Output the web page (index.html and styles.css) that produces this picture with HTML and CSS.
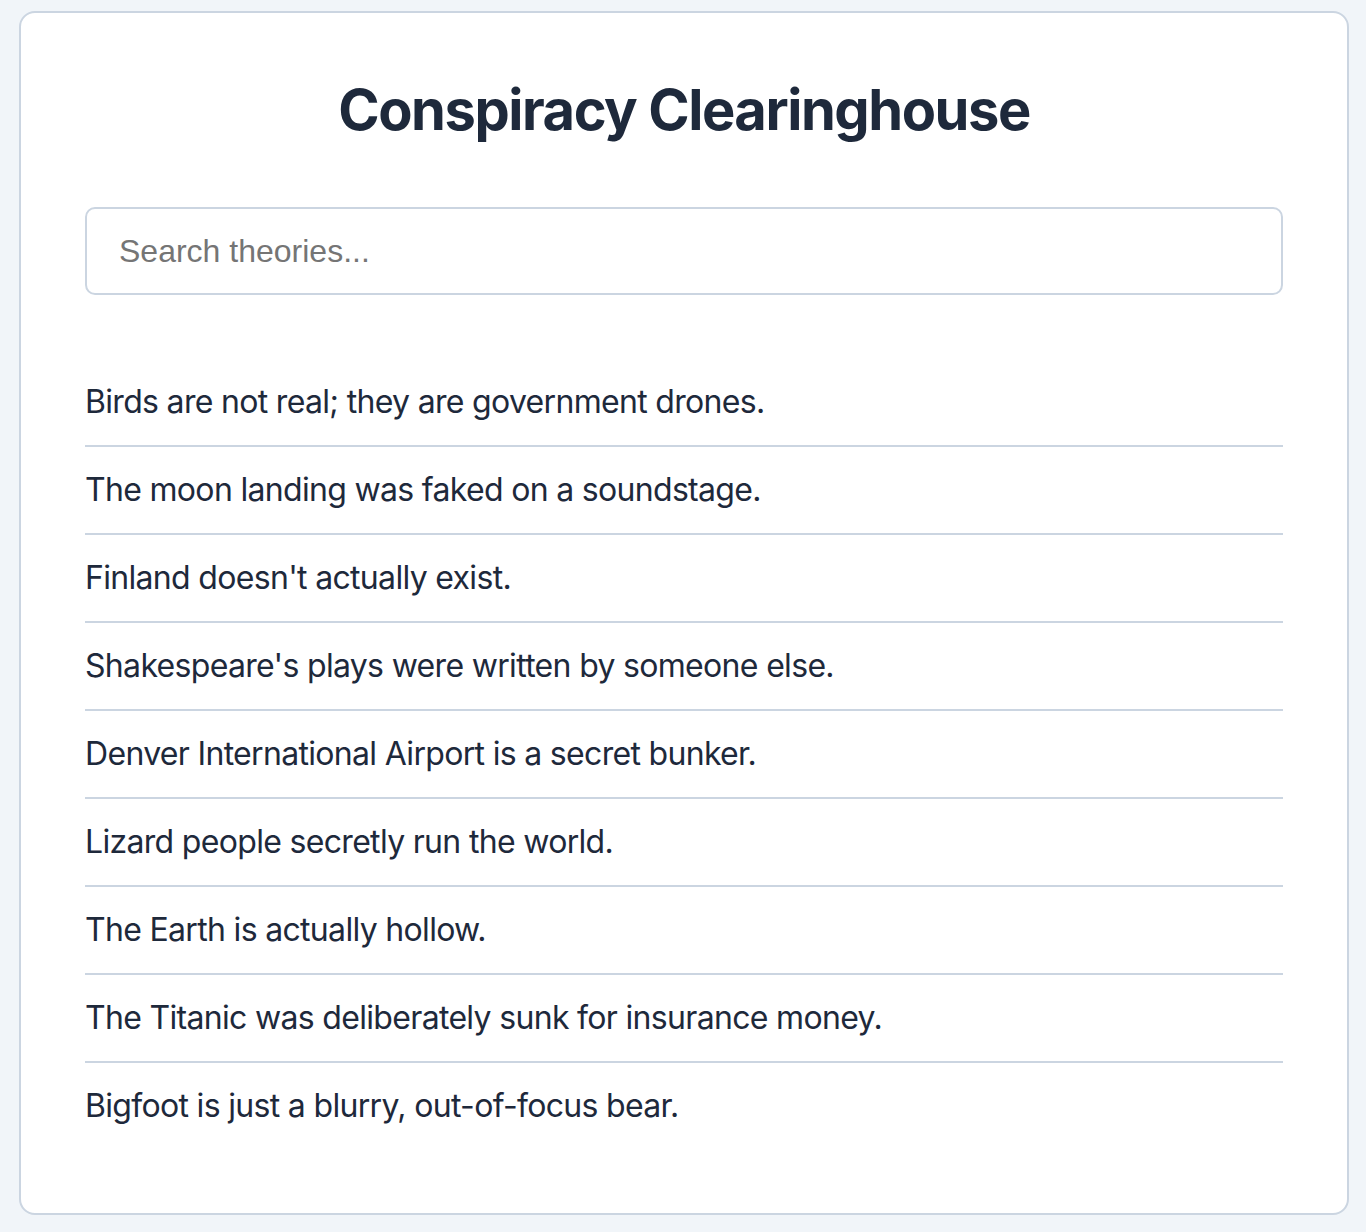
FILE: index.html
```html
<!DOCTYPE html>
<html lang="en">
<head>
<meta charset="utf-8">
<title>Conspiracy Clearinghouse</title>
<link rel="stylesheet" href="styles.css">
</head>
<body>
  <main class="card">
    <h1 class="title">Conspiracy Clearinghouse</h1>
    <input class="search" type="text" placeholder="Search theories...">
    <ul class="list">
      <li class="item">Birds are not real; they are government drones.</li>
      <li class="item">The moon landing was faked on a soundstage.</li>
      <li class="item">Finland doesn't actually exist.</li>
      <li class="item">Shakespeare's plays were written by someone else.</li>
      <li class="item">Denver International Airport is a secret bunker.</li>
      <li class="item">Lizard people secretly run the world.</li>
      <li class="item">The Earth is actually hollow.</li>
      <li class="item">The Titanic was deliberately sunk for insurance money.</li>
      <li class="item">Bigfoot is just a blurry, out-of-focus bear.</li>
    </ul>
  </main>
</body>
</html>
```
FILE: styles.css
```css
* { box-sizing: border-box; }
html, body { margin: 0; padding: 0; }
body {
  background: #f1f5f9;
  font-family: Inter, "Noto Sans", sans-serif;
  color: #1e293b;
  min-height: 1232px;
  padding-top: 11px;
}
.card {
  width: 1330px;
  margin: 0 0 0 19px;
  background: #ffffff;
  border: 2px solid #cbd5e1;
  border-radius: 16px;
  padding: 64px;
  display: flex;
  flex-direction: column;
}
.title {
  margin: 0 0 64px 0;
  text-align: center;
  font-size: 56px;
  line-height: 66px;
  font-weight: 700;
  letter-spacing: -1.45px;
  color: #1e293b;
}
.search {
  display: block;
  width: 100%;
  height: 88px;
  border: 2px solid #cbd5e1;
  border-radius: 10px;
  padding: 0 32px;
  font-family: "Liberation Sans", Arial, sans-serif;
  font-size: 32px;
  color: #1e293b;
  background: #fff;
  outline: none;
}
.search::placeholder { color: #757575; }
.list {
  list-style: none;
  margin: 64px 0 0 0;
  padding: 0;
}
.item {
  padding: 24px 0;
  font-size: 32px;
  line-height: 38px;
  letter-spacing: -0.68px;
  border-bottom: 2px solid #cbd5e1;
}
.item:last-child { border-bottom: none; }
```
